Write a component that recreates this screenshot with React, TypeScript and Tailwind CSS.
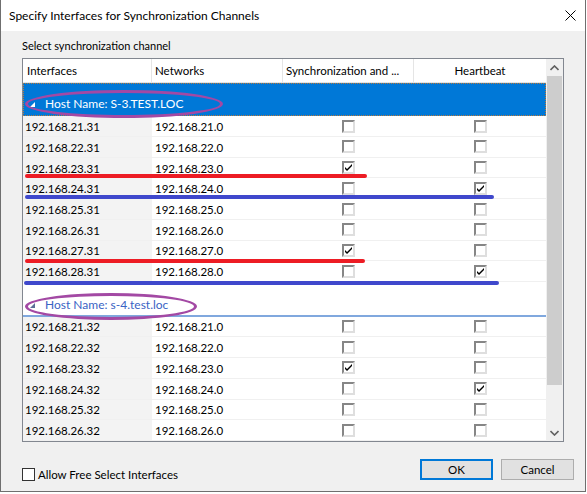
import React from "react";

type Row = { ip: string; net: string; sync: boolean; hb: boolean };

const group1: Row[] = [21, 22, 23, 24, 25, 26, 27, 28].map((n) => ({
  ip: `192.168.${n}.31`,
  net: `192.168.${n}.0`,
  sync: n === 23 || n === 27,
  hb: n === 24 || n === 28,
}));

const group2: Row[] = [21, 22, 23, 24, 25, 26].map((n) => ({
  ip: `192.168.${n}.32`,
  net: `192.168.${n}.0`,
  sync: n === 23,
  hb: n === 24,
}));

const font = { fontFamily: '"Segoe UI", Lato, "Noto Sans", sans-serif' };

function Check({ on }: { on: boolean }) {
  return (
    <div className="w-[13px] h-[13px] bg-white border-2 border-t-[#868686] border-l-[#868686] border-b-[#dedede] border-r-[#dedede] flex items-center justify-center">
      {on && (
        <svg width="9" height="9" viewBox="0 0 9 9">
          <path d="M1 4 L3 6 L8 1 L8 3 L3 8 L1 6 Z" fill="#000" />
        </svg>
      )}
    </div>
  );
}

function DataRow({ r }: { r: Row }) {
  return (
    <div className="flex h-[21px] border-b border-[#f0f0f0] text-[11.5px] leading-[14px] text-black">
      <div className="w-[129px] bg-[#f3f3f3] pl-[2px] pt-[2px] flex items-center">{r.ip}</div>
      <div className="w-[131px] bg-white pl-[3px] pt-[2px] flex items-center">{r.net}</div>
      <div className="w-[131px] bg-white flex items-center justify-center">
        <Check on={r.sync} />
      </div>
      <div className="w-[132px] bg-white flex items-center justify-center">
        <Check on={r.hb} />
      </div>
    </div>
  );
}

function Arrow({ color }: { color: string }) {
  return (
    <svg width="7" height="7" viewBox="0 0 7 7" className="mr-[9px] mb-[3px]">
      <path d="M6 1 L6 6 L1 6 Z" fill={color} />
    </svg>
  );
}

export default function App() {
  return (
    <div className="relative w-[586px] h-[492px] bg-[#f0f0f0] border-l border-r border-b border-[#6f6f6f] overflow-hidden" style={font}>
      {/* title bar */}
      <div className="h-[31px] bg-white flex items-center justify-between pl-[8px] pr-[9px]">
        <span className="text-[12px] text-black">Specify Interfaces for Synchronization Channels</span>
        <svg width="11" height="11" viewBox="0 0 11 11">
          <path d="M0.5 0.5 L10.5 10.5 M10.5 0.5 L0.5 10.5" stroke="#000" strokeWidth="1" />
        </svg>
      </div>

      <div className="pl-[21px] pt-[7px]">
        <div className="text-[11px] text-black h-[20px] leading-[16px]">Select synchronization channel</div>

        {/* list view */}
        <div className="w-[542px] h-[384px] border border-[#828790] bg-white flex overflow-hidden">
          <div className="w-[523px] flex flex-col">
            <div className="flex h-[24px] border-b border-[#e5e5e5] bg-white text-[11.5px] text-black">
              <div className="w-[129px] pl-[4px] flex items-center border-r border-[#e5e5e5]">Interfaces</div>
              <div className="w-[131px] pl-[3px] flex items-center border-r border-[#e5e5e5]">Networks</div>
              <div className="w-[131px] pl-[3px] flex items-center border-r border-[#e5e5e5]">Synchronization and ...</div>
              <div className="w-[132px] flex items-center justify-center">Heartbeat</div>
            </div>

            <div className="h-[34px] bg-[#0078d7] border border-dotted border-[#b97a3c] flex items-end pb-[4px] pl-[5px] text-[12px] leading-[14px] text-white">
              <Arrow color="#ffffff" />
              <span>Host Name: S-3.TEST.LOC</span>
            </div>
            {group1.map((r) => (
              <DataRow key={r.ip} r={r} />
            ))}

            <div className="h-[35px] bg-white border-b-2 border-[#80a8de] flex items-end pb-[3px] pl-[6px] text-[12px] leading-[14px] text-[#3a63c4]">
              <Arrow color="#5a6f96" />
              <span>Host Name: s-4.test.loc</span>
            </div>
            {group2.map((r) => (
              <DataRow key={r.ip} r={r} />
            ))}
          </div>

          {/* scrollbar */}
          <div className="w-[17px] bg-[#f0f0f0] flex flex-col items-center">
            <div className="h-[17px] flex items-center justify-center">
              <svg width="9" height="6" viewBox="0 0 9 6">
                <path d="M0.5 5 L4.5 1 L8.5 5" stroke="#606060" strokeWidth="1.6" fill="none" />
              </svg>
            </div>
            <div className="w-[15px] h-[309px] bg-[#cdcdcd]" />
            <div className="flex-1" />
            <div className="h-[17px] flex items-center justify-center">
              <svg width="9" height="6" viewBox="0 0 9 6">
                <path d="M0.5 1 L4.5 5 L8.5 1" stroke="#606060" strokeWidth="1.6" fill="none" />
              </svg>
            </div>
          </div>
        </div>

        {/* footer */}
        <div className="flex items-start justify-between pr-[11px] pt-[17px]">
          <label className="flex items-center gap-[3px] text-[11.5px] leading-[13px] text-black mt-[9px]">
            <span className="w-[13px] h-[13px] bg-white border border-[#333333]" />
            Allow Free Select Interfaces
          </label>
          <div className="flex gap-[8px]">
            <button className="w-[73px] h-[21px] bg-[#e1e1e1] border-2 border-[#0078d7] text-[11.5px] text-black">OK</button>
            <button className="w-[73px] h-[21px] bg-[#e1e1e1] border border-[#adadad] text-[11.5px] text-black">Cancel</button>
          </div>
        </div>
      </div>

      {/* annotations */}
      <div className="absolute left-[24px] top-[90px] w-[198px] h-[28px] rounded-[50%] border-[3px] border-[#a349a4]" />
      <div className="absolute left-[24px] top-[293px] w-[172px] h-[27px] rounded-[50%] border-[3px] border-[#a349a4]" />
      <div className="absolute left-[24px] top-[174px] w-[342px] h-[4px] rounded-full bg-[#ed1c24]" />
      <div className="absolute left-[24px] top-[195px] w-[469px] h-[4px] rounded-full bg-[#3f48cc]" />
      <div className="absolute left-[24px] top-[259px] w-[340px] h-[4px] rounded-full bg-[#ed1c24]" />
      <div className="absolute left-[23px] top-[281px] w-[475px] h-[4px] rounded-full bg-[#3f48cc]" />
    </div>
  );
}
